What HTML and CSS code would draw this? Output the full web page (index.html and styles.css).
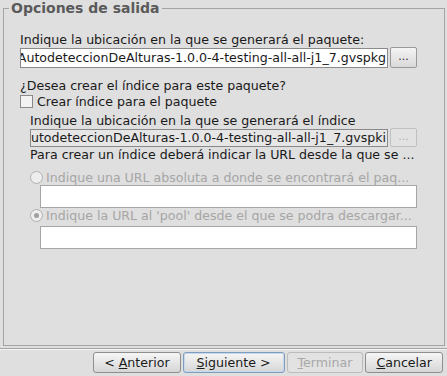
FILE: index.html
```html
<!DOCTYPE html>
<html lang="es">
<head>
  <meta charset="UTF-8">
  <title>Opciones de salida</title>
  <link rel="stylesheet" href="styles.css">
</head>
<body>
  <div class="wizard">
    <fieldset class="panel">
      <legend>Opciones de salida</legend>

      <div class="label">Indique la ubicación en la que se generará el paquete:</div>
      <div class="file-row">
        <div class="field"><span>/home/gvsig/AutodeteccionDeAlturas-1.0.0-4-testing-all-all-j1_7.gvspkg</span></div>
        <button class="browse">...</button>
      </div>

      <div class="label question">¿Desea crear el índice para este paquete?</div>
      <label class="check"><span class="box"></span>Crear índice para el paquete</label>

      <div class="indent">
        <div class="label">Indique la ubicación en la que se generará el índice</div>
        <div class="file-row small">
          <div class="field disabled"><span>/home/gvsig/AutodeteccionDeAlturas-1.0.0-4-testing-all-all-j1_7.gvspki</span></div>
          <button class="browse" disabled>...</button>
        </div>
        <div class="label">Para crear un índice deberá indicar la URL desde la que se ...</div>

        <div class="radio first"><span class="dot"></span>Indique una URL absoluta a donde se encontrará el paq...</div>
        <div class="url-field"></div>
        <div class="radio"><span class="dot selected"></span>Indique la URL al 'pool' desde el que se podra descargar...</div>
        <div class="url-field last"></div>
      </div>
    </fieldset>

    <div class="separator"></div>

    <div class="buttons">
      <button class="btn">&lt; <u>A</u>nterior</button>
      <button class="btn focus"><u>S</u>iguiente &gt;</button>
      <button class="btn" disabled><u>T</u>erminar</button>
      <button class="btn"><u>C</u>ancelar</button>
    </div>
  </div>
</body>
</html>
```

FILE: styles.css
```css
* {
  box-sizing: border-box;
}

body {
  margin: 0;
  background: #dfdfdf;
  font-family: "DejaVu Sans", sans-serif;
  font-size: 12.6px;
  color: #1a1a1a;
}

.wizard {
  width: 447px;
  height: 376px;
  display: flex;
  flex-direction: column;
}

.panel {
  margin: 0 2px 0 3px;
  padding: 15px 27px 0 16px;
  border: 1px solid #a4a4a4;
  height: 346px;
  min-width: 0;
}

legend {
  font-weight: bold;
  font-size: 14px;
  line-height: 17px;
  color: #5a5a5a;
  padding: 0 2px;
  margin-left: -11px;
}

.label {
  height: 15px;
  line-height: 15px;
  white-space: nowrap;
}

.question {
  margin-top: 10px;
}

.file-row {
  display: flex;
  align-items: center;
  gap: 2px;
  height: 21px;
}

.file-row.small {
  height: 19px;
}

.field {
  flex: 1;
  min-width: 0;
  height: 20px;
  border: 1px solid #8a8a8a;
  background: #fff;
  display: flex;
  justify-content: flex-end;
  align-items: center;
  overflow: hidden;
  white-space: nowrap;
  padding-right: 1px;
}

.field span {
  flex-shrink: 0;
}

.small .field {
  height: 18px;
}

.field.disabled {
  background: #e6e6e6;
}

.browse {
  width: 27px;
  height: 21px;
  border: 1px solid #9a9a9a;
  border-radius: 2px;
  background: linear-gradient(#f4f4f4, #d9d9d9);
  font-family: "DejaVu Sans", sans-serif;
  font-size: 11px;
  padding: 0 0 3px;
  color: #222;
}

.small .browse {
  height: 19px;
}

.browse:disabled {
  background: #e2e2e2;
  border-color: #c0c0c0;
  color: #b0b0b0;
}

.check {
  display: flex;
  align-items: center;
  height: 15px;
  margin-top: 1px;
}

.box {
  width: 13px;
  height: 13px;
  border: 1px solid #8a8a8a;
  background: #f2f2f2;
  margin-right: 4px;
}

.indent {
  padding-left: 10px;
  margin-top: 4px;
}

.radio {
  display: flex;
  align-items: center;
  height: 15px;
  white-space: nowrap;
  color: #a6a6a6;
}

.radio.first {
  margin-top: 8px;
}

.dot {
  width: 13px;
  height: 13px;
  border: 1px solid #b0b0b0;
  border-radius: 50%;
  background: #ededed;
  margin-right: 3px;
  position: relative;
}

.dot.selected::after {
  content: "";
  position: absolute;
  left: 3px;
  top: 3px;
  width: 5px;
  height: 5px;
  border-radius: 50%;
  background: #a0a0a0;
}

.url-field {
  margin-left: 10px;
  height: 23px;
  border: 1px solid #a6a6a6;
  background: #fff;
}

.url-field.last {
  margin-top: 3px;
}

.separator {
  margin-top: 2px;
  height: 2px;
  border-top: 1px solid #a4a4a4;
  border-bottom: 1px solid #f4f4f4;
}

.buttons {
  display: flex;
  justify-content: flex-end;
  gap: 2px;
  padding: 2px 4px 0 0;
}

.btn {
  height: 21px;
  padding: 0 10px;
  border: 1px solid #8e8e8e;
  border-radius: 3px;
  background: linear-gradient(#f6f6f6, #d6d6d6);
  font-family: "DejaVu Sans", sans-serif;
  font-size: 12.6px;
  color: #1a1a1a;
}

.btn.focus {
  padding: 0 13px;
  border-color: #7d9ec0;
  box-shadow: inset 0 0 0 1px #c8d8ea;
}

.btn:disabled {
  color: #a8a8a8;
  border-color: #bcbcbc;
  background: #e2e2e2;
}
```
